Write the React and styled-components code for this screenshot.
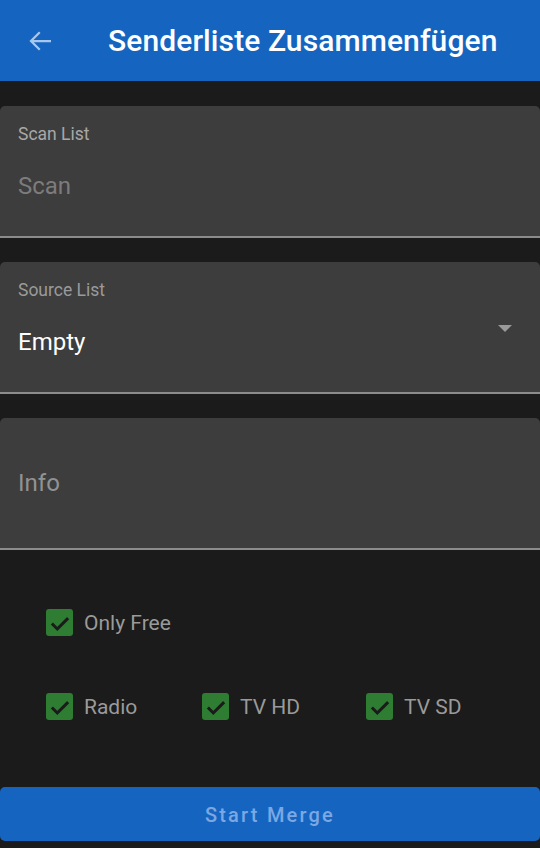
import React from "react";
import styled, { createGlobalStyle } from "styled-components";

const GlobalStyle = createGlobalStyle`
  html, body {
    margin: 0;
    padding: 0;
    background: #1b1b1b;
    font-family: Roboto, "Noto Sans", sans-serif;
  }
`;

const Page = styled.div`
  width: 540px;
  height: 848px;
  display: flex;
  flex-direction: column;
  background: #1b1b1b;
  overflow: hidden;
`;

const AppBar = styled.header`
  height: 81px;
  flex-shrink: 0;
  background: #1565c0;
  display: flex;
  align-items: center;
  padding-left: 26px;
  box-sizing: border-box;
`;

const BackButton = styled.div`
  width: 30px;
  height: 30px;
  display: flex;
  align-items: center;
  justify-content: center;
  margin-right: 52px;
`;

const Title = styled.h1`
  margin: 0;
  font-size: 30px;
  font-weight: 500;
  color: #ffffff;
  letter-spacing: 0.1px;
`;

const Fields = styled.div`
  display: flex;
  flex-direction: column;
  gap: 24px;
  padding-top: 25px;
`;

const Field = styled.div`
  height: 132px;
  box-sizing: border-box;
  background: #3d3d3d;
  border-radius: 5px 5px 0 0;
  border-bottom: 2px solid #8c8c8c;
  padding: 18px 28px 0 18px;
  display: flex;
  flex-direction: column;
  justify-content: ${(p) => (p.$centered ? "center" : "flex-start")};
  ${(p) => p.$centered && "padding-top: 0;"}
`;

const Label = styled.div`
  font-size: 17.5px;
  line-height: 20px;
  color: ${(p) => p.$color || "#a8a8a8"};
`;

const ValueRow = styled.div`
  display: flex;
  justify-content: space-between;
  align-items: flex-start;
  margin-top: ${(p) => (p.$noLabel ? "0" : "28px")};
`;

const Value = styled.div`
  font-size: 24px;
  line-height: 28px;
  color: ${(p) => p.$color};
`;

const Caret = styled.div`
  width: 0;
  height: 0;
  margin-top: -3px;
  border-left: 7px solid transparent;
  border-right: 7px solid transparent;
  border-top: 7px solid #9a9a9a;
`;

const Options = styled.div`
  display: flex;
  flex-direction: column;
  gap: 57px;
  padding: 59px 0 0 46px;
`;

const OptionRow = styled.div`
  display: grid;
  grid-template-columns: 156px 164px 1fr;
`;

const Option = styled.label`
  display: flex;
  align-items: center;
  gap: 11px;
  height: 27px;
  font-size: 21px;
  color: #9a9a9a;
`;

const Box = styled.span`
  width: 27px;
  height: 27px;
  border-radius: 3px;
  background: #2e7d32;
  display: flex;
  align-items: center;
  justify-content: center;
`;

const Footer = styled.div`
  margin-top: auto;
  padding-bottom: 7px;
`;

const MergeButton = styled.button`
  width: 100%;
  height: 54px;
  border: none;
  border-radius: 5px;
  background: #1565c0;
  color: #7ba8e3;
  font-family: Roboto, sans-serif;
  font-size: 20px;
  font-weight: 500;
  letter-spacing: 2.2px;
  padding-top: 2px;
`;

const Check = ({ label }) => (
  <Option>
    <Box>
      <svg width="26" height="26" viewBox="0 0 24 24">
        <path
          d="M4.5 12.5l5 5L19.5 7.5"
          fill="none"
          stroke="#1b1b1b"
          strokeWidth="2.8"
        />
      </svg>
    </Box>
    {label}
  </Option>
);

export default function App() {
  return (
    <>
      <GlobalStyle />
      <Page>
        <AppBar>
          <BackButton>
            <svg width="30" height="30" viewBox="0 0 24 24">
              <path
                d="M20 12H4.5M11 5l-7 7 7 7"
                fill="none"
                stroke="#a9c6ec"
                strokeWidth="1.8"
              />
            </svg>
          </BackButton>
          <Title>Senderliste Zusammenfügen</Title>
        </AppBar>

        <Fields>
          <Field>
            <Label>Scan List</Label>
            <ValueRow>
              <Value $color="#7c7c7c">Scan</Value>
            </ValueRow>
          </Field>
          <Field>
            <Label $color="#9a9a9a">Source List</Label>
            <ValueRow>
              <Value $color="#ffffff">Empty</Value>
              <Caret />
            </ValueRow>
          </Field>
          <Field $centered>
            <ValueRow $noLabel>
              <Value $color="#929292">Info</Value>
            </ValueRow>
          </Field>
        </Fields>

        <Options>
          <OptionRow>
            <Check label="Only Free" />
          </OptionRow>
          <OptionRow>
            <Check label="Radio" />
            <Check label="TV HD" />
            <Check label="TV SD" />
          </OptionRow>
        </Options>

        <Footer>
          <MergeButton>Start Merge</MergeButton>
        </Footer>
      </Page>
    </>
  );
}
